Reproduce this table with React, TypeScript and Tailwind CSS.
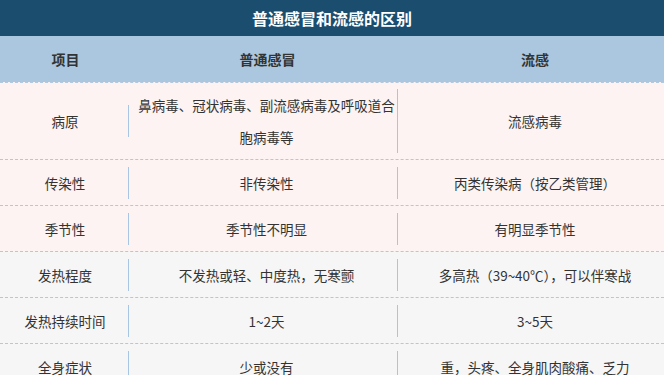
import React from 'react';

const rows: { item: string; cold: string; flu: string; tone: 'pink' | 'gray' }[] = [
  { item: '病原', cold: '鼻病毒、冠状病毒、副流感病毒及呼吸道合胞病毒等', flu: '流感病毒', tone: 'pink' },
  { item: '传染性', cold: '非传染性', flu: '丙类传染病（按乙类管理）', tone: 'pink' },
  { item: '季节性', cold: '季节性不明显', flu: '有明显季节性', tone: 'pink' },
  { item: '发热程度', cold: '不发热或轻、中度热，无寒颤', flu: '多高热（39~40℃），可以伴寒战', tone: 'gray' },
  { item: '发热持续时间', cold: '1~2天', flu: '3~5天', tone: 'gray' },
  { item: '全身症状', cold: '少或没有', flu: '重，头疼、全身肌肉酸痛、乏力', tone: 'gray' },
];

const App: React.FC = () => {
  return (
    <div className="w-[664px] h-[375px] overflow-hidden bg-white font-['Noto_Sans_CJK_SC','Noto_Sans',sans-serif] text-[#333]">
      {/* Title */}
      <div className="h-[36px] bg-[#1b4d6e] flex items-center justify-center text-white text-[16px] font-bold">
        普通感冒和流感的区别
      </div>

      {/* Header */}
      <div className="h-[46px] bg-[#abc7e0] flex items-center text-[14px] font-bold">
        <div className="w-[129px] shrink-0 pl-[2px] text-center">项目</div>
        <div className="w-[269px] shrink-0 pl-[8px] text-center">普通感冒</div>
        <div className="w-[266px] shrink-0 pl-[8px] text-center">流感</div>
      </div>

      {/* Body */}
      {rows.map((r) => (
        <div
          key={r.item}
          className={`flex items-center min-h-[46px] py-[6px] border-t border-dashed border-[#b3c7dd] text-[13.5px] leading-[32px] ${
            r.tone === 'pink' ? 'bg-[#fcf3f2]' : 'bg-[#f6f6f6]'
          }`}
        >
          <div className="w-[129px] shrink-0 pl-[2px] text-center border-r border-[#a8c5e2]">{r.item}</div>
          <div className="w-[269px] shrink-0 pl-[8px] pr-[1px] text-center border-r border-[#a8c5e2]">{r.cold}</div>
          <div className="w-[266px] shrink-0 pl-[8px] text-center">{r.flu}</div>
        </div>
      ))}
    </div>
  );
};

export default App;
